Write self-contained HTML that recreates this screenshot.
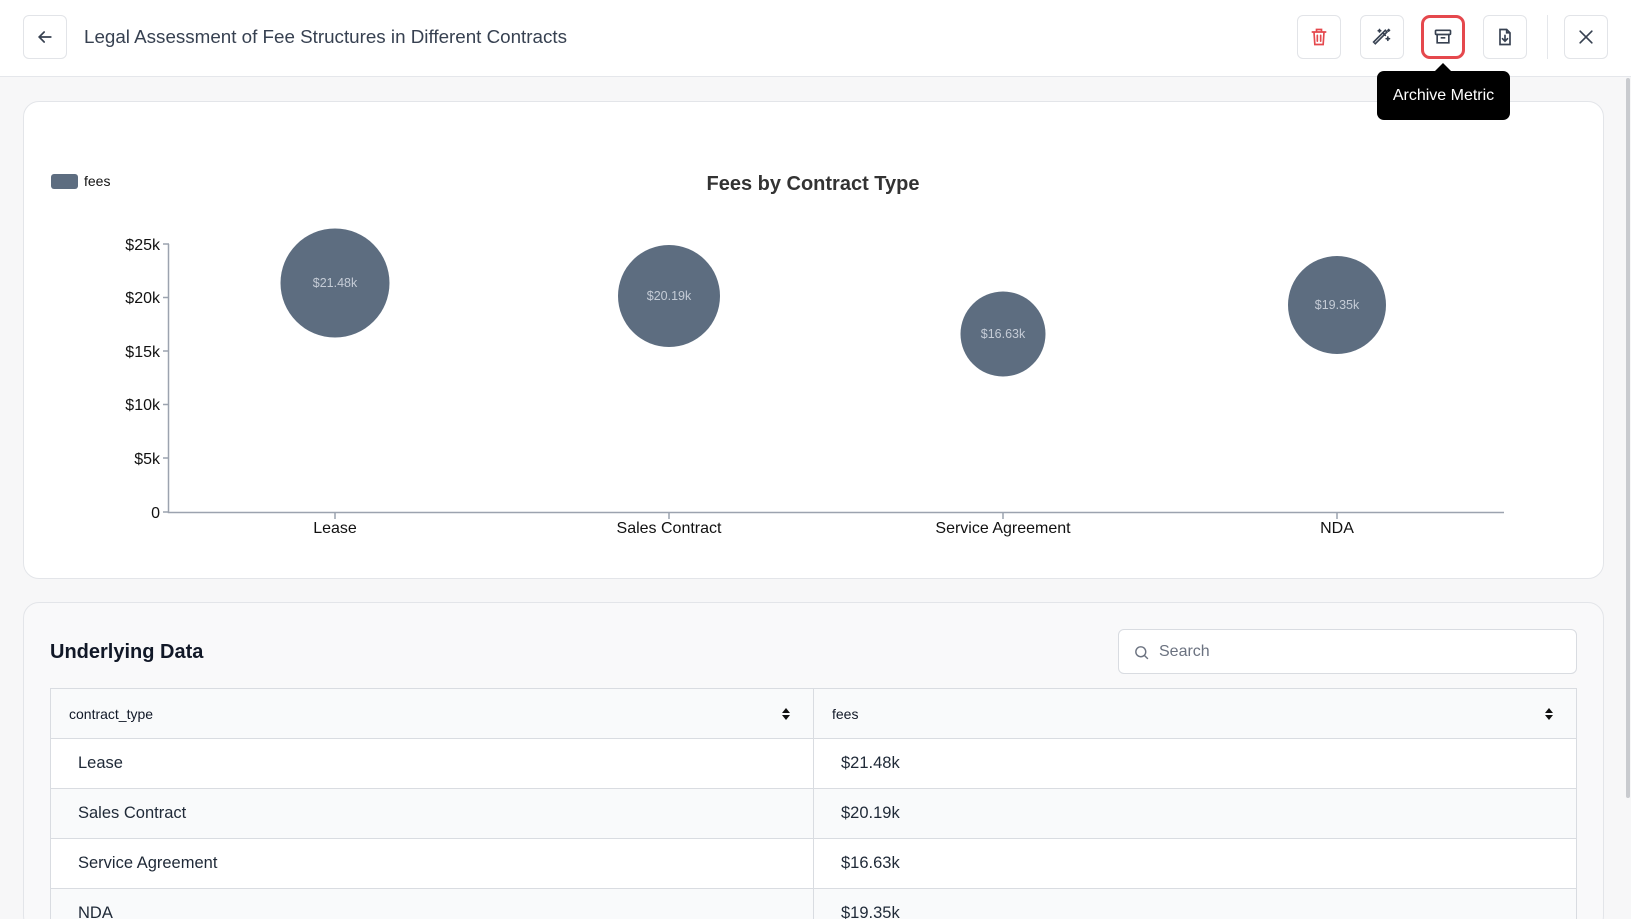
<!DOCTYPE html>
<html style="overflow:hidden;height:919px"><head><meta charset="utf-8"><style>
*{box-sizing:border-box;margin:0;padding:0}
body{width:1631px;height:919px;overflow:hidden;background:#f7f7f8;font-family:"Liberation Sans",sans-serif;color:#111827;position:relative}
.hdr{position:absolute;left:0;top:0;width:1631px;height:77px;background:#fff;border-bottom:1px solid #e5e7eb}
.btn{position:absolute;top:15px;width:44px;height:44px;border:1px solid #e2e4e8;border-radius:6px;background:#fff;display:flex;align-items:center;justify-content:center}
.title{position:absolute;left:84px;top:26px;font-size:18.8px;color:#374151}
.card{position:absolute;left:23px;width:1581px;background:#fff;border:1px solid #e3e5e9;border-radius:16px}
.tip{position:absolute;left:1377px;top:71px;width:133px;height:49px;background:#000;border-radius:7px;color:#fff;font-size:16px;display:flex;align-items:center;justify-content:center}
.tip:before{content:"";position:absolute;left:58px;top:-8px;border:8px solid transparent;border-top:0;border-bottom-color:#000}
table{position:absolute;left:50px;top:688px;width:1527px;border-collapse:collapse;border:1px solid #d9dce1}
td,th{border:1px solid #d9dce1;height:50px;text-align:left}
th{background:#f9fafb;font-size:14px;font-weight:normal;padding-left:18px;color:#111827;position:relative}
td{font-size:16.5px;padding-left:27px;color:#1f2937}
tr:nth-child(odd) td{background:#f9fafb}
tr:nth-child(even) td{background:#fff}
.sort{position:absolute;right:22px;top:18px}
</style></head><body>
<div class="hdr">
 <div class="btn" style="left:23px"><svg width="20" height="20" viewBox="0 0 24 24" fill="none" stroke="#374151" stroke-width="2" stroke-linecap="round"><path d="M19 12H5M11 6l-6 6 6 6"/></svg></div>
 <div class="title">Legal Assessment of Fee Structures in Different Contracts</div>
 <div class="btn" style="left:1297px"><svg width="20" height="20" viewBox="0 0 24 24" fill="none" stroke="#e5484d" stroke-width="2" stroke-linecap="round"><path d="M4 6h16M9 6V3h6v3M6 6l1 15h10l1-15M10 10v7M14 10v7"/></svg></div>
 <div class="btn" style="left:1360px"><svg width="20" height="20" viewBox="0 0 24 24" fill="none" stroke="#374151" stroke-width="2" stroke-linecap="round"><path d="M4 20L18 6l-2-2L2 18zM14 8l2 2M9 3v3M7.5 4.5h3M19 12v4M17 14h4M20 3v2M19 4h2"/></svg></div>
 <div class="btn" style="left:1421px;border:3px solid #e5484d;border-radius:9px"><svg width="20" height="20" viewBox="0 0 24 24" fill="none" stroke="#374151" stroke-width="2" stroke-linecap="round"><rect x="3" y="4" width="18" height="5" rx="1"/><path d="M5 9v10h14V9M10 13h4"/></svg></div>
 <div class="btn" style="left:1483px"><svg width="20" height="20" viewBox="0 0 24 24" fill="none" stroke="#374151" stroke-width="2" stroke-linecap="round"><path d="M14 3H6v18h12V7zM14 3v4h4M12 10v7M9 14l3 3 3-3"/></svg></div>
 <div style="position:absolute;left:1547px;top:15px;width:1px;height:44px;background:#e5e7eb"></div>
 <div class="btn" style="left:1564px"><svg width="20" height="20" viewBox="0 0 24 24" fill="none" stroke="#374151" stroke-width="2" stroke-linecap="round"><path d="M5 5l14 14M19 5L5 19"/></svg></div>
</div>
<div class="card" style="top:101px;height:478px"></div>
<svg style="position:absolute;left:0;top:0" width="1631" height="600" font-family="Liberation Sans, sans-serif">
 <rect x="51" y="174" width="27" height="15" rx="3" fill="#5d6d80"/>
 <text x="84" y="186" font-size="14" fill="#111">fees</text>
 <text x="813" y="190" font-size="20" font-weight="bold" text-anchor="middle" fill="#333">Fees by Contract Type</text>
 <g stroke="#9ca3af" stroke-width="1.5" fill="none"><path d="M168.5 244V512.5H1504"/>
 <path d="M163 244h6M163 297.5h6M163 351h6M163 404.5h6M163 458h6M163 512h6M335 512v7M669 512v7M1003 512v7M1337 512v7"/></g>
 <g font-size="16" fill="#111" text-anchor="end">
 <text x="160" y="250">$25k</text><text x="160" y="303">$20k</text><text x="160" y="357">$15k</text><text x="160" y="410">$10k</text><text x="160" y="464">$5k</text><text x="160" y="518">0</text></g>
 <g font-size="16" fill="#111" text-anchor="middle">
 <text x="335" y="533">Lease</text><text x="669" y="533">Sales Contract</text><text x="1003" y="533">Service Agreement</text><text x="1337" y="533">NDA</text></g>
 <g fill="#5d6d80"><circle cx="335" cy="283" r="54.5"/><circle cx="669" cy="296" r="51"/><circle cx="1003" cy="334" r="42.5"/><circle cx="1337" cy="305" r="49"/></g>
 <g font-size="12.5" fill="#c5ccd6" text-anchor="middle">
 <text x="335" y="287">$21.48k</text><text x="669" y="300">$20.19k</text><text x="1003" y="338">$16.63k</text><text x="1337" y="309">$19.35k</text></g>
</svg>
<div class="tip">Archive Metric</div>
<div class="card" style="top:602px;height:330px;background:#f9f9fa"></div>
<div style="position:absolute;left:50px;top:641px;font-size:20px;font-weight:bold">Underlying Data</div>
<div style="position:absolute;left:1118px;top:629px;width:459px;height:45px;background:#fff;border:1px solid #d9dce1;border-radius:6px">
 <svg style="position:absolute;left:14px;top:14px" width="17" height="17" viewBox="0 0 24 24" fill="none" stroke="#6b7280" stroke-width="2"><circle cx="11" cy="11" r="7"/><path d="M16 16l5 5"/></svg>
 <span style="position:absolute;left:40px;top:13px;font-size:16px;color:#6b7280">Search</span></div>
<table>
 <tr><th style="width:763px">contract_type<svg class="sort" width="10" height="14" viewBox="0 0 10 14"><path d="M1 6L5 1 9 6zM1 8l4 5 4-5z" fill="#111"/></svg></th><th>fees<svg class="sort" width="10" height="14" viewBox="0 0 10 14"><path d="M1 6L5 1 9 6zM1 8l4 5 4-5z" fill="#111"/></svg></th></tr>
 <tr><td>Lease</td><td>$21.48k</td></tr>
 <tr><td>Sales Contract</td><td>$20.19k</td></tr>
 <tr><td>Service Agreement</td><td>$16.63k</td></tr>
 <tr><td>NDA</td><td>$19.35k</td></tr>
</table>
<div style="position:absolute;left:1626px;top:78px;width:4px;height:720px;background:#c9cbcf;border-radius:2px"></div>
</body></html>
